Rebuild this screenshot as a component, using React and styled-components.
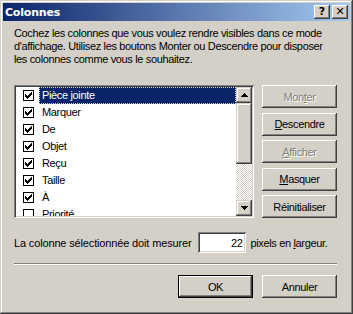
import styled, { createGlobalStyle } from "styled-components";

const GlobalStyle = createGlobalStyle`
  html, body { margin: 0; padding: 0; background: #d4d0c8; }
  body {
    font-family: "Liberation Sans", Arial, sans-serif;
    font-size: 11px;
    letter-spacing: -0.35px;
    color: #000;
  }
`;

const face = "#d4d0c8";

const Window = styled.div`
  width: 353px;
  height: 314px;
  box-sizing: border-box;
  padding: 3px;
  overflow: hidden;
  background: ${face};
  box-shadow: inset -1px -1px #404040, inset 1px 1px ${face}, inset -2px -2px #808080, inset 2px 2px #fff;
  display: flex;
  flex-direction: column;
`;

const Caption = styled.div`
  height: 18px;
  flex: none;
  display: flex;
  align-items: center;
  padding: 0 2px 0 2px;
  background: linear-gradient(to right, #0a246a, #a6caf0);
`;

const CaptionTitle = styled.span`
  flex: 1;
  color: #fff;
  font-family: "DejaVu Sans", sans-serif;
  font-weight: bold;
  font-size: 11px;
  letter-spacing: -0.2px;
`;

const CaptionButton = styled.div`
  width: 16px;
  height: 14px;
  box-sizing: border-box;
  margin-left: ${p => (p.$gap ? "2px" : "0")};
  background: ${face};
  box-shadow: inset -1px -1px #404040, inset 1px 1px #fff, inset -2px -2px #808080;
  display: flex;
  align-items: center;
  justify-content: center;
  font-family: "DejaVu Sans", sans-serif;
  font-weight: bold;
  font-size: 11px;
  letter-spacing: 0;
  line-height: 1;
  padding-bottom: 1px;
`;

const Content = styled.div`
  padding: 6px 13px 0 11px;
  display: flex;
  flex-direction: column;
  white-space: nowrap;
`;

const Intro = styled.p`
  margin: 0;
  line-height: 13px;
`;

const Main = styled.div`
  margin-top: 19px;
  display: flex;
  gap: 8px;
`;

const ListBox = styled.div`
  width: 240px;
  height: 133px;
  box-sizing: border-box;
  padding: 2px;
  background: #fff;
  box-shadow: inset 1px 1px #808080, inset -1px -1px #fff, inset 2px 2px #404040, inset -2px -2px ${face};
  display: flex;
`;

const Items = styled.div`
  flex: 1;
  overflow: hidden;
`;

const Item = styled.div`
  height: 17px;
  display: flex;
  align-items: center;
  padding-left: 7px;
`;

const Check = styled.div`
  width: 11px;
  height: 11px;
  box-sizing: border-box;
  border: 1px solid #000;
  background: #fff;
  display: flex;
  align-items: center;
  justify-content: center;
`;

const Label = styled.div`
  margin-left: 5px;
  flex: 1;
  height: 17px;
  line-height: 17px;
  padding-left: 3px;
  background: ${p => (p.$selected ? "#0a246a" : "transparent")};
  color: ${p => (p.$selected ? "#fff" : "#000")};
  outline: ${p => (p.$selected ? `1px dotted ${face}` : "none")};
  outline-offset: -1px;
`;

const ScrollBar = styled.div`
  width: 16px;
  display: flex;
  flex-direction: column;
`;

const ScrollButton = styled.div`
  height: 16px;
  flex: none;
  box-sizing: border-box;
  background: ${face};
  box-shadow: inset -1px -1px #404040, inset 1px 1px ${face}, inset -2px -2px #808080, inset 2px 2px #fff;
  display: flex;
  align-items: center;
  justify-content: center;
`;

const Thumb = styled(ScrollButton)`
  height: 61px;
`;

const Track = styled.div`
  flex: 1;
  background-image: conic-gradient(#fff 25%, ${face} 0 50%, #fff 0 75%, ${face} 0);
  background-size: 2px 2px;
`;

const ButtonColumn = styled.div`
  width: 75px;
  height: 133px;
  display: flex;
  flex-direction: column;
  justify-content: space-between;
`;

const Button = styled.button`
  width: 75px;
  height: 23px;
  box-sizing: border-box;
  padding: 0;
  border: none;
  background: ${face};
  box-shadow: ${p =>
    p.$default
      ? "inset 0 0 0 1px #000, inset -2px -2px #404040, inset 2px 2px #fff, inset -3px -3px #808080"
      : `inset -1px -1px #404040, inset 1px 1px #fff, inset -2px -2px #808080, inset 2px 2px ${face}`};
  font-family: "Liberation Sans", Arial, sans-serif;
  font-size: 11px;
  letter-spacing: -0.35px;
  color: ${p => (p.disabled ? "#808080" : "#000")};
  text-shadow: ${p => (p.disabled ? "1px 1px #fff" : "none")};
  cursor: default;
  u { text-decoration-thickness: 1px; text-underline-offset: 1px; }
`;

const WidthRow = styled.div`
  margin-top: 14px;
  display: flex;
  align-items: center;
`;

const WidthLabel = styled.span`
  letter-spacing: -0.15px;
`;

const NumberInput = styled.div`
  width: 48px;
  height: 21px;
  box-sizing: border-box;
  margin: 0 4px 0 7px;
  padding: 0 4px;
  background: #fff;
  box-shadow: inset 1px 1px #808080, inset -1px -1px #fff, inset 2px 2px #404040, inset -2px -2px ${face};
  display: flex;
  align-items: center;
  justify-content: flex-end;
`;

const Separator = styled.div`
  margin-top: 10px;
  border-top: 1px solid #808080;
  border-bottom: 1px solid #fff;
`;

const Footer = styled.div`
  margin-top: 10px;
  display: flex;
  justify-content: flex-end;
  gap: 9px;
`;

const CheckMark = () => (
  <svg width="7" height="7" viewBox="0 0 7 7" shapeRendering="crispEdges">
    <path d="M0 2h1v1h1v1h1v-1h1v-1h1v-1h1v-1h1v3h-1v1h-1v1h-1v1h-1v1h-1v-1h-1v-1h-1v-1h-1z" fill="#000" />
  </svg>
);

const Arrow = ({ down }) => (
  <svg width="7" height="4" viewBox="0 0 7 4" shapeRendering="crispEdges">
    <path d={down ? "M0 0h7L3.5 4z" : "M3.5 0L7 4H0z"} fill="#000" />
  </svg>
);

const columns = [
  { name: "Pièce jointe", on: true },
  { name: "Marquer", on: true },
  { name: "De", on: true },
  { name: "Objet", on: true },
  { name: "Reçu", on: true },
  { name: "Taille", on: true },
  { name: "À", on: true },
  { name: "Priorité", on: false },
];

export default function App() {
  return (
    <Window>
      <GlobalStyle />
      <Caption>
        <CaptionTitle>Colonnes</CaptionTitle>
        <CaptionButton>?</CaptionButton>
        <CaptionButton $gap>✕</CaptionButton>
      </Caption>
      <Content>
        <Intro>
          Cochez les colonnes que vous voulez rendre visibles dans ce mode<br />
          d'affichage. Utilisez les boutons Monter ou Descendre pour disposer<br />
          les colonnes comme vous le souhaitez.
        </Intro>
        <Main>
          <ListBox>
            <Items>
              {columns.map((c, i) => (
                <Item key={c.name}>
                  <Check>{c.on && <CheckMark />}</Check>
                  <Label $selected={i === 0}>{c.name}</Label>
                </Item>
              ))}
            </Items>
            <ScrollBar>
              <ScrollButton><Arrow /></ScrollButton>
              <Thumb />
              <Track />
              <ScrollButton><Arrow down /></ScrollButton>
            </ScrollBar>
          </ListBox>
          <ButtonColumn>
            <Button disabled>Mon<u>t</u>er</Button>
            <Button><u>D</u>escendre</Button>
            <Button disabled><u>A</u>fficher</Button>
            <Button><u>M</u>asquer</Button>
            <Button>Réinitialiser</Button>
          </ButtonColumn>
        </Main>
        <WidthRow>
          <WidthLabel>La colonne sélectionnée doit mesurer</WidthLabel>
          <NumberInput>22</NumberInput>
          <span>pixels en <u>l</u>argeur.</span>
        </WidthRow>
        <Separator />
        <Footer>
          <Button $default>OK</Button>
          <Button>Annuler</Button>
        </Footer>
      </Content>
    </Window>
  );
}
